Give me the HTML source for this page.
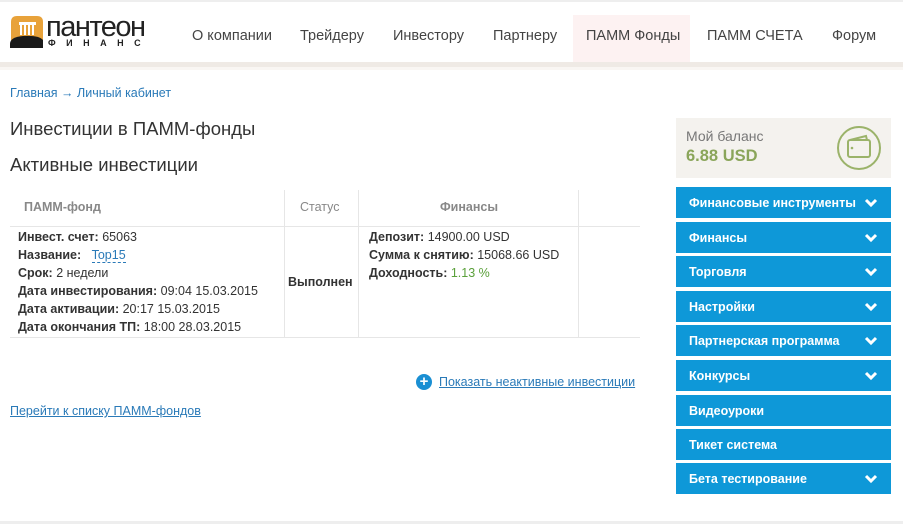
<!DOCTYPE html>
<html><head><meta charset="utf-8"><style>
*{margin:0;padding:0;box-sizing:border-box}
body{width:903px;height:524px;background:#fff;font-family:"Liberation Sans",sans-serif;position:relative;overflow:hidden;color:#333}
.a{position:absolute}
.nav{top:28px;font-size:14.5px;color:#444}
.menu{left:676px;width:215px;height:31px;background:#0e98d8;color:#fff;font-weight:bold;font-size:12.5px;padding:9px 0 0 13px}
.menu svg{position:absolute;right:13px;top:11px}
b{color:#333}
.t{font-size:12.5px;line-height:18px;color:#333}
</style></head><body>
<div class="a" style="top:0;left:0;width:903px;height:2px;background:#eee"></div>
<svg class="a" style="left:9px;top:14px" width="36" height="36" viewBox="0 0 36 36">
<path d="M2 8 Q2 2 8 2 L28 2 Q34 2 34 8 L34 26 Q18 22 2 30 Z" fill="#e8a23a"/>
<path d="M1 30 Q1 23 14 22 Q30 21 34 26 L34 34 L1 34 Z" fill="#1a1a1a"/>
<rect x="10" y="8" width="17" height="3" fill="#fff"/>
<rect x="11" y="11" width="2" height="10" fill="#fff"/><rect x="15" y="11" width="2" height="10" fill="#fff"/><rect x="19" y="11" width="2" height="10" fill="#fff"/><rect x="23" y="11" width="2" height="10" fill="#fff"/>
</svg>
<div class="a" style="left:46px;top:11px;font-size:29px;color:#222;letter-spacing:-1.5px">пантеон</div>
<div class="a" style="left:48px;top:38px;font-size:9px;font-weight:bold;color:#222;letter-spacing:10.5px">ФИНАНС</div>
<div class="a" style="left:573px;top:15px;width:117px;height:48px;background:#fdf2f2"></div>
<div class="a nav" style="left:192px">О компании</div>
<div class="a nav" style="left:300px">Трейдеру</div>
<div class="a nav" style="left:393px">Инвестору</div>
<div class="a nav" style="left:493px">Партнеру</div>
<div class="a nav" style="left:586px">ПАММ Фонды</div>
<div class="a nav" style="left:707px">ПАММ СЧЕТА</div>
<div class="a nav" style="left:832px">Форум</div>
<div class="a" style="top:62px;left:0;width:903px;height:5px;background:#efeae5"></div>
<div class="a" style="top:67px;left:0;width:903px;height:3px;background:#f9f6f3"></div>
<div class="a" style="left:10px;top:86px;font-size:12.5px;color:#2a7ab8">Главная → Личный кабинет</div>
<div class="a" style="left:10px;top:118px;font-size:18.5px;color:#333">Инвестиции в ПАММ-фонды</div>
<div class="a" style="left:10px;top:154px;font-size:18.5px;color:#333">Активные инвестиции</div>
<div class="a" style="left:10px;top:226px;width:630px;height:1px;background:#e6e6e6"></div>
<div class="a" style="left:10px;top:337px;width:630px;height:1px;background:#e6e6e6"></div>
<div class="a" style="left:284px;top:190px;width:1px;height:148px;background:#e6e6e6"></div>
<div class="a" style="left:358px;top:190px;width:1px;height:148px;background:#e6e6e6"></div>
<div class="a" style="left:578px;top:190px;width:1px;height:148px;background:#e6e6e6"></div>
<div class="a" style="left:24px;top:200px;font-size:12.5px;font-weight:bold;color:#888">ПАММ-фонд</div>
<div class="a" style="left:300px;top:200px;font-size:12.5px;color:#888">Статус</div>
<div class="a" style="left:440px;top:200px;font-size:12.5px;font-weight:bold;color:#888">Финансы</div>
<div class="a t" style="left:18px;top:228px"><b>Инвест. счет:</b> 65063<br><b>Название:</b> &nbsp;&nbsp;<span style="color:#2a7ab8;border-bottom:1px dashed #2a7ab8">Top15</span><br><b>Срок:</b> 2 недели<br><b>Дата инвестирования:</b> 09:04 15.03.2015<br><b>Дата активации:</b> 20:17 15.03.2015<br><b>Дата окончания ТП:</b> 18:00 28.03.2015</div>
<div class="a t" style="left:288px;top:273px;font-weight:bold">Выполнен</div>
<div class="a t" style="left:369px;top:228px"><b>Депозит:</b> 14900.00 USD<br><b>Сумма к снятию:</b> 15068.66 USD<br><b>Доходность:</b> <span style="color:#5aa03a">1.13 %</span></div>
<div class="a" style="left:416px;top:374px;width:16px;height:16px;border-radius:50%;background:#1a8fd3;color:#fff;font-weight:bold;font-size:15px;line-height:16px;text-align:center">+</div>
<div class="a" style="left:439px;top:375px;font-size:12.5px;color:#2a7ab8;text-decoration:underline">Показать неактивные инвестиции</div>
<div class="a" style="left:10px;top:404px;font-size:12.5px;color:#2a7ab8;text-decoration:underline">Перейти к списку ПАММ-фондов</div>
<div class="a" style="left:676px;top:118px;width:215px;height:60px;background:#f4f2ee"></div>
<div class="a" style="left:686px;top:128px;font-size:14px;color:#777">Мой баланс</div>
<div class="a" style="left:686px;top:147px;font-size:16.5px;font-weight:bold;color:#8aa55a">6.88 USD</div>
<svg class="a" style="left:836px;top:125px" width="46" height="46" viewBox="0 0 46 46"><circle cx="23" cy="23" r="21" fill="none" stroke="#9bb36a" stroke-width="2"/><rect x="12" y="15" width="22" height="17" rx="2" fill="none" stroke="#9bb36a" stroke-width="2"/><path d="M14 15 L30 11 L31 15" fill="none" stroke="#9bb36a" stroke-width="2"/><circle cx="16" cy="23" r="1.3" fill="#9bb36a"/></svg>
<div class="a menu" style="top:187px">Финансовые инструменты<svg width="14" height="10" viewBox="0 0 14 10"><path d="M2 2 L7 7 L12 2" fill="none" stroke="#fff" stroke-width="3"/></svg></div>
<div class="a menu" style="top:222px">Финансы<svg width="14" height="10" viewBox="0 0 14 10"><path d="M2 2 L7 7 L12 2" fill="none" stroke="#fff" stroke-width="3"/></svg></div>
<div class="a menu" style="top:256px">Торговля<svg width="14" height="10" viewBox="0 0 14 10"><path d="M2 2 L7 7 L12 2" fill="none" stroke="#fff" stroke-width="3"/></svg></div>
<div class="a menu" style="top:291px">Настройки<svg width="14" height="10" viewBox="0 0 14 10"><path d="M2 2 L7 7 L12 2" fill="none" stroke="#fff" stroke-width="3"/></svg></div>
<div class="a menu" style="top:325px">Партнерская программа<svg width="14" height="10" viewBox="0 0 14 10"><path d="M2 2 L7 7 L12 2" fill="none" stroke="#fff" stroke-width="3"/></svg></div>
<div class="a menu" style="top:360px">Конкурсы<svg width="14" height="10" viewBox="0 0 14 10"><path d="M2 2 L7 7 L12 2" fill="none" stroke="#fff" stroke-width="3"/></svg></div>
<div class="a menu" style="top:395px">Видеоуроки</div>
<div class="a menu" style="top:429px">Тикет система</div>
<div class="a menu" style="top:463px">Бета тестирование<svg width="14" height="10" viewBox="0 0 14 10"><path d="M2 2 L7 7 L12 2" fill="none" stroke="#fff" stroke-width="3"/></svg></div>
<div class="a" style="top:521px;left:0;width:903px;height:3px;background:#eee"></div>
</body></html>
